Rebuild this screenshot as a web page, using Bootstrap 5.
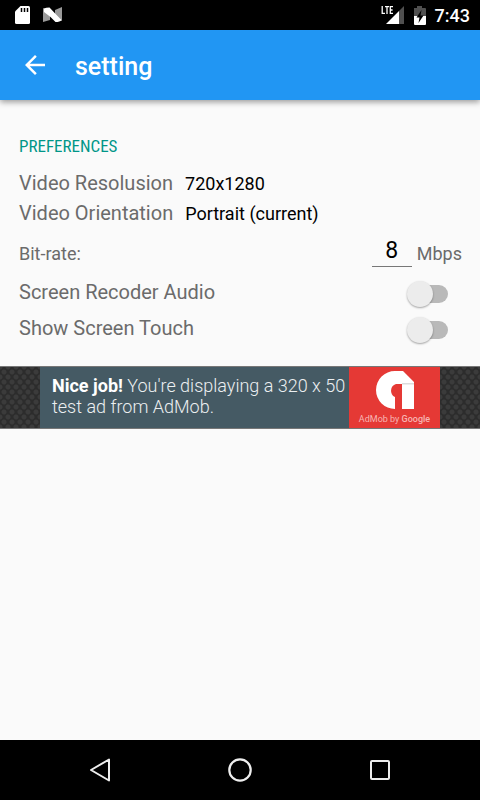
<!DOCTYPE html>
<html lang="en">
<head>
<meta charset="utf-8">
<meta name="viewport" content="width=device-width, initial-scale=1">
<title>setting</title>
<link href="https://cdn.jsdelivr.net/npm/bootstrap@5.3.0/dist/css/bootstrap.min.css" rel="stylesheet">
<style>
  body { font-family: Roboto, "Liberation Sans", sans-serif; background: #fafafa; color: #000; }
  svg { display: block; flex: none; }
  .status-bar { height: 30px; background: #000; color: #fff; padding: 0 10px 0 15px; }
  .clock { font-size: 18px; font-weight: 500; line-height: 30px; padding-top: 2px; }
  .app-bar { height: 70px; background: #2196f3; padding: 0 20px; box-shadow: 0 2px 6px rgba(0,0,0,.4); gap: 25px; }
  .app-title { font-size: 25px; font-weight: 500; line-height: 30px; padding-top: 4px; color: #fff; }
  .prefs { padding: 34px 18px 20px 19px; color: #6b6b6b; }
  .section-title { font-family: "Roboto Condensed", Roboto, sans-serif; font-size: 17px; line-height: 24px; color: #009688; margin: 0 0 10px; }
  .pref-name { font-size: 20px; }
  .pref-row { height: 30px; gap: 12px; line-height: 30px; }
  .pref-value { font-size: 18px; color: #000; padding-top: 2px; }
  .rate-row { height: 46px; font-size: 18px; padding-top: 4px; }
  .rate-input { width: 40px; height: 32px; margin: 0 5px 4px 0; border: 0; border-bottom: 1px solid #777; background: transparent; font-size: 23px; line-height: 28px; padding: 0; text-align: center; color: #000; outline: 0; }
  .switch-row { height: 36px; }
  .toggle { appearance: none; display: flex; align-items: center; width: 34px; height: 18px; margin: 4px 14px 0 0; background: #b9b9b9; border-radius: 9px; }
  .toggle::before { content: ""; flex: none; width: 26px; height: 26px; margin-left: -7px; border-radius: 50%; background: #ececec; box-shadow: 0 1px 2px rgba(0,0,0,.35); }
  .toggle:checked { background-color: #80cbc4; }
  .toggle:checked::before { margin-left: 15px; background: #009688; }
  .ad-strip { height: 63px; background-color: #2c2c2c; background-image: radial-gradient(circle, #3b3b3b 2px, transparent 3px), radial-gradient(circle, #3b3b3b 2px, transparent 3px); background-size: 8px 10px; background-position: 0 0, 4px 5px; border-top: 1px solid #777; border-bottom: 1px solid #777; }
  .ad-unit { width: 400px; background: #455a64; color: #eceff1; }
  .ad-copy { font-size: 18px; font-weight: 300; line-height: 21px; padding: 8px 0 0 12px; }
  .ad-copy b { font-weight: 700; color: #fff; }
  .ad-brand { flex: none; width: 91px; background: #e53935; color: #f7b5b3; font-size: 9px; line-height: 12px; padding-top: 4px; gap: 4px; white-space: nowrap; }
  .ad-brand b { font-weight: 500; }
  .nav-keys { height: 60px; background: #000; padding: 0 40px; }
  .nav-keys button { background: none; border: 0; padding: 0; width: 120px; display: flex; align-items: center; justify-content: center; }
</style>
</head>
<body>
<div class="d-flex flex-column min-vh-100">
  <div class="status-bar d-flex align-items-center">
    <svg width="16" height="18" viewBox="0 0 16 18" aria-hidden="true"><path fill="#fff" d="M5.500 0H13.500Q15 0 15 1.500V16.500Q15 18 13.500 18H1.500Q0 18 0 16.500V5.500z"/><path d="M6.500 2v4M9.500 2v4M12.500 2v4" stroke="#000" stroke-width="1.500"/></svg>
    <svg class="ms-2 ps-1" width="24" height="16" viewBox="0 0 20 16" aria-hidden="true"><path fill="#999" d="M0 1L7 4V13L0 15zM19 0V14L12 11V3z"/><path fill="#fff" d="M1 1.500Q3 .5 6.500 .5Q12 6.500 18.500 13Q17 15 12.500 15Q7 9 1 5z"/></svg>
    <div class="d-flex align-items-center ms-auto">
      <svg width="24" height="20" viewBox="0 0 24 20" aria-label="LTE signal"><path fill="#505050" d="M18 6L23 1V19H18z"/><path fill="#fff" d="M5 19L18 6V19z"/><path fill="none" stroke="#fff" stroke-width="1.300" d="M1.200 1V8.300H4M4 1.700H8M6 1.700V9M12 1.700H9.300V8.300H12M9.300 5H11.600"/></svg>
      <svg class="ms-2" width="14" height="19" viewBox="0 0 14 19" aria-hidden="true"><path fill="#505050" d="M1 2H4V0H9V2H12Q13 2 13 3V10H1z"/><path fill="#fff" d="M1 10H13V18Q13 19 12 19H2Q1 19 1 18z"/><path d="M8.500 4L3.500 11.500H6.500L5.500 17L10.500 9.500H7.500z"/></svg>
      <span class="clock ms-2">7:43</span>
    </div>
  </div>
  <header class="app-bar d-flex align-items-center">
    <button type="button" class="btn p-0 border-0" aria-label="Back"><svg width="30" height="30" viewBox="0 0 24 24"><path fill="#fff" d="M20 11H7.830l5.590-5.590L12 4l-8 8 8 8 1.410-1.410L7.830 13H20v-2z"/></svg></button>
    <h1 class="app-title m-0">setting</h1>
  </header>
  <main class="flex-grow-1">
    <form class="prefs">
      <h2 class="section-title fw-normal">PREFERENCES</h2>
      <div class="pref-row d-flex align-items-center"><span class="pref-name">Video Resolusion</span><span class="pref-value">720x1280</span></div>
      <div class="pref-row d-flex align-items-center"><span class="pref-name">Video Orientation</span><span class="pref-value">Portrait (current)</span></div>
      <div class="rate-row d-flex align-items-center">
        <label for="rate" class="me-auto">Bit-rate:</label>
        <input id="rate" class="rate-input" type="text" inputmode="numeric" value="8">
        <span>Mbps</span>
      </div>
      <div class="switch-row d-flex align-items-center justify-content-between"><label for="audio" class="pref-name">Screen Recoder Audio</label><input id="audio" class="toggle" type="checkbox" role="switch"></div>
      <div class="switch-row d-flex align-items-center justify-content-between"><label for="touch" class="pref-name">Show Screen Touch</label><input id="touch" class="toggle" type="checkbox" role="switch"></div>
    </form>
    <aside class="ad-strip d-flex justify-content-center">
      <div class="ad-unit d-flex">
        <div class="ad-copy flex-grow-1"><b>Nice job!</b> You're displaying a 320 x 50<br>test ad from AdMob.</div>
        <div class="ad-brand d-flex flex-column align-items-center">
          <svg width="38" height="38" viewBox="0 0 38 38" aria-hidden="true"><path fill="#fff" d="M19 0H27L38 11V38H26V13H20A7 7 0 0 0 19 26V38A19 19 0 0 1 19 0z"/><path fill="#ddd" d="M26 12H38V13.500H26z"/></svg>
          <span>AdMob by <b>Google</b></span>
        </div>
      </div>
    </aside>
  </main>
  <nav class="nav-keys d-flex justify-content-between" aria-label="System">
    <button type="button" aria-label="Back"><svg width="24" height="26" viewBox="0 0 24 26"><path fill="none" stroke="#eee" stroke-width="2" stroke-linejoin="round" d="M21 2.500V23.500L3 13z"/></svg></button>
    <button type="button" aria-label="Home"><svg width="26" height="26" viewBox="0 0 26 26"><circle cx="13" cy="13" r="10.700" fill="none" stroke="#eee" stroke-width="2.200"/></svg></button>
    <button type="button" aria-label="Recent apps"><svg width="24" height="24" viewBox="0 0 24 24"><rect x="3" y="3" width="18" height="18" rx="1" fill="none" stroke="#eee" stroke-width="2"/></svg></button>
  </nav>
</div>
<script src="https://cdn.jsdelivr.net/npm/bootstrap@5.3.0/dist/js/bootstrap.bundle.min.js"></script>
</body>
</html>
